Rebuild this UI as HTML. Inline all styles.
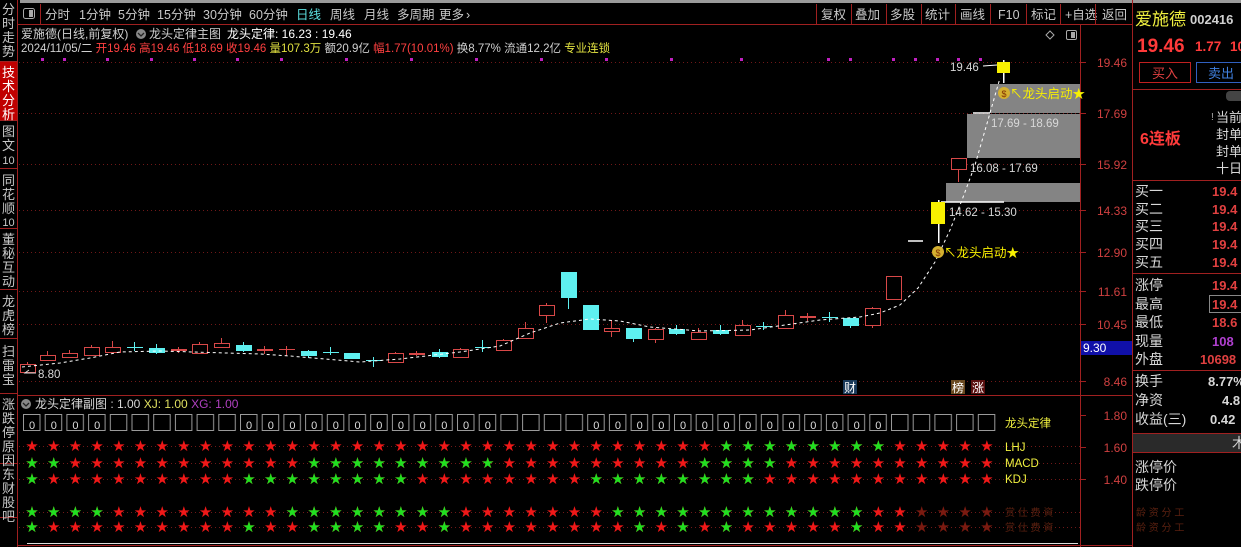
<!DOCTYPE html>
<html><head><meta charset="utf-8"><style>
html,body{margin:0;padding:0;background:#000;width:1241px;height:547px;overflow:hidden}
svg{display:block;font-family:"Liberation Sans","Noto Sans CJK SC",sans-serif}
.s{font-family:"DejaVu Sans",sans-serif;font-size:15px}
</style></head><body>
<svg width="1241" height="547" viewBox="0 0 1241 547" xmlns="http://www.w3.org/2000/svg">
<defs>
<pattern id="bp" patternUnits="userSpaceOnUse" x="23" y="414" width="21.7" height="17">
<rect x="0.5" y="0.5" width="16.5" height="16" fill="none" stroke="#9a9a9a"/>
</pattern>
</defs>
<rect width="1241" height="547" fill="#000"/>
<rect x="20" y="0" width="1221" height="3" fill="#9a9a9a"/>
<!-- left sidebar -->
<g stroke="#a02020" stroke-width="1" fill="none">
<line x1="17.5" y1="0" x2="17.5" y2="547"/>
<line x1="0" y1="61.5" x2="17" y2="61.5"/><line x1="0" y1="120.5" x2="17" y2="120.5"/>
<line x1="0" y1="168.5" x2="17" y2="168.5"/><line x1="0" y1="228.5" x2="17" y2="228.5"/>
<line x1="0" y1="289.5" x2="17" y2="289.5"/><line x1="0" y1="338.5" x2="17" y2="338.5"/>
<line x1="0" y1="393.5" x2="17" y2="393.5"/><line x1="0" y1="463.5" x2="17" y2="463.5"/>
<line x1="0" y1="517.5" x2="17" y2="517.5"/>
</g>
<rect x="0" y="62" width="17" height="58" fill="#c00000"/>
<g font-size="13" fill="#c8c8c8" text-anchor="middle">
<text x="8.5" y="14">分</text><text x="8.5" y="28">时</text><text x="8.5" y="42">走</text><text x="8.5" y="56">势</text>
<text x="8.5" y="77" fill="#fff">技</text><text x="8.5" y="91" fill="#fff">术</text><text x="8.5" y="105" fill="#fff">分</text><text x="8.5" y="119" fill="#fff">析</text>
<text x="8.5" y="136">图</text><text x="8.5" y="150">文</text><text x="8.5" y="164" font-size="11">10</text>
<text x="8.5" y="185">同</text><text x="8.5" y="199">花</text><text x="8.5" y="213">顺</text><text x="8.5" y="226" font-size="11">10</text>
<text x="8.5" y="244">董</text><text x="8.5" y="258">秘</text><text x="8.5" y="272">互</text><text x="8.5" y="286">动</text>
<text x="8.5" y="306">龙</text><text x="8.5" y="320">虎</text><text x="8.5" y="334">榜</text>
<text x="8.5" y="356">扫</text><text x="8.5" y="370">雷</text><text x="8.5" y="384">宝</text>
<text x="8.5" y="409">涨</text><text x="8.5" y="423">跌</text><text x="8.5" y="437">停</text><text x="8.5" y="451">原</text><text x="8.5" y="465">因</text>
<text x="8.5" y="479">东</text><text x="8.5" y="493">财</text><text x="8.5" y="507">股</text><text x="8.5" y="521">吧</text>
</g>
<!-- toolbar -->
<line x1="18" y1="24.5" x2="1132" y2="24.5" stroke="#a02020"/>
<rect x="23.5" y="8.5" width="11" height="10" rx="2" fill="none" stroke="#aaa"/><rect x="29" y="10" width="4" height="7" fill="#aaa"/>
<line x1="40.5" y1="4" x2="40.5" y2="24" stroke="#a02020"/>
<g font-size="12.5" fill="#c8c8c8">
<text x="45" y="19">分时</text><text x="79" y="19">1分钟</text><text x="118" y="19">5分钟</text><text x="157" y="19">15分钟</text><text x="203" y="19">30分钟</text><text x="249" y="19">60分钟</text>
<text x="296" y="19" fill="#5ce0e0">日线</text><text x="330" y="19">周线</text><text x="364" y="19">月线</text><text x="397" y="19">多周期</text><text x="439" y="19">更多</text><text x="466" y="19">›</text>
<text x="821" y="19">复权</text><text x="855" y="19">叠加</text><text x="890" y="19">多股</text><text x="925" y="19">统计</text><text x="960" y="19">画线</text><text x="998" y="19">F10</text><text x="1031" y="19">标记</text><text x="1065" y="19">+自选</text><text x="1102" y="19">返回</text>
</g>
<g stroke="#a02020"><line x1="816.5" y1="4" x2="816.5" y2="24"/><line x1="851.5" y1="4" x2="851.5" y2="24"/><line x1="886.5" y1="4" x2="886.5" y2="24"/><line x1="921.5" y1="4" x2="921.5" y2="24"/><line x1="955.5" y1="4" x2="955.5" y2="24"/><line x1="990.5" y1="4" x2="990.5" y2="24"/><line x1="1026.5" y1="4" x2="1026.5" y2="24"/><line x1="1060.5" y1="4" x2="1060.5" y2="24"/><line x1="1095.5" y1="4" x2="1095.5" y2="24"/></g>
<!-- info lines -->
<g font-size="12" fill="#d0d0d0">
<text x="21" y="38">爱施德(日线,前复权)</text>
<circle cx="141" cy="34" r="5" fill="#888"/><path d="M138 33l3 3 3-3" stroke="#222" stroke-width="1.3" fill="none"/>
<text x="149" y="38">龙头定律主图</text><text x="227" y="38" fill="#fff">龙头定律: 16.23 : 19.46</text>
<text x="21" y="52" font-size="11.5">2024/11/05/二 <tspan fill="#ff4040">开19.46 高19.46 低18.69 收19.46</tspan> <tspan fill="#e0e040">量107.3万</tspan> 额20.9亿 <tspan fill="#ff4040">幅1.77(10.01%)</tspan> 换8.77% 流通12.2亿 <tspan fill="#e0e040">专业连锁</tspan></text>
</g>
<path d="M1050 31l4 4-4 4-4-4z" stroke="#aaa" fill="none"/>
<rect x="1066.5" y="30.5" width="10" height="9" rx="1.5" fill="none" stroke="#aaa"/><rect x="1071" y="32" width="4" height="6" fill="#aaa"/>
<!-- frame lines -->
<g stroke="#a02020">
<line x1="1080.5" y1="25" x2="1080.5" y2="547"/>
<line x1="1132.5" y1="0" x2="1132.5" y2="547"/>
<line x1="18" y1="395.5" x2="1132" y2="395.5"/>
<line x1="18" y1="545.5" x2="1132" y2="545.5"/>
</g>
<line x1="27" y1="543.5" x2="1078" y2="543.5" stroke="#ddd"/>
<!-- grid -->
<g stroke="#701818" stroke-dasharray="1 3">
<line x1="19" y1="62.5" x2="1080" y2="62.5"/><line x1="19" y1="113.5" x2="1080" y2="113.5"/><line x1="19" y1="164.5" x2="1080" y2="164.5"/>
<line x1="19" y1="210.5" x2="1080" y2="210.5"/><line x1="19" y1="252.5" x2="1080" y2="252.5"/><line x1="19" y1="291.5" x2="1080" y2="291.5"/>
<line x1="19" y1="324.5" x2="1080" y2="324.5"/><line x1="19" y1="381.5" x2="1080" y2="381.5"/>
<line x1="19" y1="446.5" x2="1080" y2="446.5"/><line x1="19" y1="463.5" x2="1080" y2="463.5"/><line x1="19" y1="479.5" x2="1080" y2="479.5"/><line x1="19" y1="512.5" x2="1080" y2="512.5"/><line x1="19" y1="527.5" x2="1080" y2="527.5"/>
</g>
<!-- axis -->
<g stroke="#a02020"><line x1="1080" y1="62.5" x2="1086" y2="62.5"/><line x1="1080" y1="113.5" x2="1086" y2="113.5"/><line x1="1080" y1="164.5" x2="1086" y2="164.5"/><line x1="1080" y1="210.5" x2="1086" y2="210.5"/><line x1="1080" y1="252.5" x2="1086" y2="252.5"/><line x1="1080" y1="291.5" x2="1086" y2="291.5"/><line x1="1080" y1="324.5" x2="1086" y2="324.5"/><line x1="1080" y1="381.5" x2="1086" y2="381.5"/><line x1="1080" y1="415.5" x2="1086" y2="415.5"/><line x1="1080" y1="447.5" x2="1086" y2="447.5"/><line x1="1080" y1="479.5" x2="1086" y2="479.5"/></g>
<g font-size="12" fill="#d04040" text-anchor="end">
<text x="1127" y="67">19.46</text><text x="1127" y="118">17.69</text><text x="1127" y="169">15.92</text><text x="1127" y="215">14.33</text><text x="1127" y="257">12.90</text><text x="1127" y="296">11.61</text><text x="1127" y="329">10.45</text><text x="1127" y="386">8.46</text>
<text x="1127" y="420">1.80</text><text x="1127" y="452">1.60</text><text x="1127" y="484">1.40</text>
</g>
<rect x="1081" y="341" width="51" height="14" fill="#1010a8"/>
<text x="1083" y="352" font-size="12" fill="#fff">9.30</text>
<!-- magenta dots -->
<g fill="#c020c0"><rect x="41" y="58" width="3" height="3"/><rect x="63" y="58" width="3" height="3"/><rect x="106" y="58" width="3" height="3"/><rect x="150" y="58" width="3" height="3"/><rect x="193" y="58" width="3" height="3"/><rect x="236" y="58" width="3" height="3"/><rect x="280" y="58" width="3" height="3"/><rect x="345" y="58" width="3" height="3"/><rect x="410" y="58" width="3" height="3"/><rect x="475" y="58" width="3" height="3"/><rect x="540" y="58" width="3" height="3"/><rect x="605" y="58" width="3" height="3"/><rect x="670" y="58" width="3" height="3"/><rect x="740" y="58" width="3" height="3"/><rect x="827" y="58" width="3" height="3"/><rect x="849" y="58" width="3" height="3"/><rect x="892" y="58" width="3" height="3"/><rect x="914" y="58" width="3" height="3"/><rect x="936" y="58" width="3" height="3"/><rect x="957" y="58" width="3" height="3"/><rect x="979" y="58" width="3" height="3"/></g>
<!-- gray boxes -->
<g fill="#848484">
<rect x="990" y="84" width="90" height="29"/>
<rect x="967" y="114" width="113" height="44"/>
<rect x="946" y="183" width="134" height="19"/>
</g>
<g stroke="#fff" stroke-width="1.5"><line x1="941" y1="202" x2="1004" y2="202"/><line x1="973" y1="113" x2="990" y2="113"/><line x1="908" y1="241" x2="923" y2="241"/></g>
<!-- candles -->
<g stroke="#d84848" fill="none">
<path d="M27.5 362V373M47.5 351V361M69.5 350V358M91.5 345V356M112.5 341V353M199.5 342V354M221.5 338V348M395.5 352V363M460.5 348V358M503.5 339V351M525.5 322V339M546.5 303V323M611.5 320V337M655.5 328V343M698.5 328V340M742.5 320V336M785.5 310V329M872.5 307V328M958.5 158V182"/>
<rect x="20.5" y="364.5" width="15" height="8" fill="#000"/>
<rect x="40.5" y="355.5" width="15" height="5" fill="#000"/>
<rect x="62.5" y="353.5" width="15" height="4" fill="#000"/>
<rect x="84.5" y="347.5" width="15" height="8" fill="#000"/>
<rect x="105.5" y="347.5" width="15" height="5" fill="#000"/>
<rect x="192.5" y="344.5" width="15" height="9" fill="#000"/>
<rect x="214.5" y="343.5" width="15" height="4" fill="#000"/>
<rect x="388.5" y="353.5" width="15" height="9" fill="#000"/>
<rect x="453.5" y="349.5" width="15" height="8" fill="#000"/>
<rect x="496.5" y="340.5" width="15" height="10" fill="#000"/>
<rect x="518.5" y="328.5" width="15" height="10" fill="#000"/>
<rect x="539.5" y="305.5" width="15" height="10" fill="#000"/>
<rect x="604.5" y="328.5" width="15" height="3" fill="#000"/>
<rect x="648.5" y="329.5" width="15" height="10" fill="#000"/>
<rect x="691.5" y="332.5" width="15" height="7" fill="#000"/>
<rect x="735.5" y="325.5" width="15" height="10" fill="#000"/>
<rect x="778.5" y="315.5" width="15" height="13" fill="#000"/>
<rect x="865.5" y="308.5" width="15" height="17" fill="#000"/>
<rect x="886.5" y="276.5" width="15" height="23" fill="#000"/>
<rect x="951.5" y="158.5" width="15" height="11" fill="#000"/>
</g>
<g fill="#d84848">
<rect x="178" y="347" width="1" height="6"/><rect x="171" y="349" width="16" height="2"/>
<rect x="264" y="346" width="1" height="8"/><rect x="257" y="349" width="16" height="2"/>
<rect x="286" y="346" width="1" height="10"/><rect x="279" y="349" width="16" height="1"/>
<rect x="416" y="351" width="1" height="5"/><rect x="409" y="353" width="16" height="2"/>
<rect x="807" y="313" width="1" height="8"/><rect x="800" y="316" width="16" height="2"/>
</g>
<g fill="#5ef0f0">
<rect x="134" y="342" width="1" height="9"/><rect x="127" y="347" width="16" height="1"/>
<rect x="156" y="344" width="1" height="10"/><rect x="149" y="348" width="16" height="5"/>
<rect x="243" y="342" width="1" height="10"/><rect x="236" y="345" width="16" height="6"/>
<rect x="308" y="350" width="1" height="8"/><rect x="301" y="351" width="16" height="5"/>
<rect x="330" y="347" width="1" height="8"/><rect x="323" y="352" width="16" height="1"/>
<rect x="344" y="353" width="16" height="6"/>
<rect x="373" y="357" width="1" height="10"/><rect x="366" y="360" width="16" height="1"/>
<rect x="439" y="349" width="1" height="9"/><rect x="432" y="352" width="16" height="5"/>
<rect x="482" y="340" width="1" height="12"/><rect x="475" y="347" width="16" height="1"/>
<rect x="568" y="272" width="1" height="37"/><rect x="561" y="272" width="16" height="26"/>
<rect x="583" y="305" width="16" height="25"/>
<rect x="633" y="328" width="1" height="14"/><rect x="626" y="328" width="16" height="11"/>
<rect x="676" y="325" width="1" height="10"/><rect x="669" y="329" width="16" height="5"/>
<rect x="720" y="325" width="1" height="10"/><rect x="713" y="330" width="16" height="4"/>
<rect x="763" y="322" width="1" height="8"/><rect x="756" y="326" width="16" height="1"/>
<rect x="829" y="312" width="1" height="10"/><rect x="822" y="317" width="16" height="1"/>
<rect x="850" y="318" width="1" height="10"/><rect x="843" y="318" width="16" height="8"/>
</g>
<rect x="938" y="200" width="1.5" height="43" fill="#fff"/>
<rect x="931" y="202" width="14" height="22" fill="#f8f000"/>
<rect x="1003" y="60" width="1.5" height="23" fill="#fff"/>
<rect x="997" y="62" width="13" height="11" fill="#f8f000"/>
<path d="M983 66L997 65" stroke="#fff"/>
<!-- MA dashed -->
<path d="M22 367 L60 363 L90 358 L120 352 L160 351 L260 354 L290 356 L360 362 L400 359 L460 352 L500 346 L530 333 L560 323 L590 319 L620 321 L650 327 L700 331 L750 330 L820 320 L860 317 L880 313 L900 305 L918 288 L935 262 L950 230 L962 200 L975 165 L988 120 L1000 78" fill="none" stroke="#fff" stroke-dasharray="3 3"/>
<!-- labels on chart -->
<g font-size="11.5" fill="#d8d8d8">
<text x="38" y="378">8.80</text><path d="M36 373H25l4-3" stroke="#ddd" fill="none"/>
<text x="950" y="71">19.46</text>
<text x="991" y="127">17.69 - 18.69</text>
<text x="970" y="172">16.08 - 17.69</text>
<text x="949" y="216">14.62 - 15.30</text>
</g>
<circle cx="1004" cy="93" r="6" fill="#d4b030"/><text x="1004" y="97" font-size="9" fill="#803000" text-anchor="middle">$</text>
<text x="1010" y="98" font-size="12.5" fill="#f8f000">↖龙头启动★</text>
<circle cx="938" cy="252" r="6" fill="#d4b030"/><text x="938" y="256" font-size="9" fill="#803000" text-anchor="middle">$</text>
<text x="944" y="257" font-size="12.5" fill="#f8f000">↖龙头启动★</text>
<rect x="843" y="380" width="14" height="14" fill="#1a3a5a"/><text x="844" y="392" font-size="12" fill="#fff">财</text>
<rect x="951" y="380" width="14" height="14" fill="#6a4a20"/><text x="952" y="392" font-size="12" fill="#fff">榜</text>
<rect x="971" y="380" width="14" height="14" fill="#5a1010"/><text x="972" y="392" font-size="12" fill="#fff">涨</text>
<!-- sub chart title -->
<circle cx="26" cy="404" r="5" fill="#888"/><path d="M23 403l3 3 3-3" stroke="#222" stroke-width="1.3" fill="none"/>
<text x="35" y="408" font-size="12" fill="#d8d8d8">龙头定律副图 : 1.00 <tspan fill="#e0e060">XJ: 1.00</tspan> <tspan fill="#b040c0">XG: 1.00</tspan></text>
<g font-size="11.5" fill="#f0f040">
<text x="1005" y="427">龙头定律</text><text x="1005" y="451">LHJ</text><text x="1005" y="467">MACD</text><text x="1005" y="483">KDJ</text>
</g>
<!-- boxes -->
<rect x="23" y="414" width="976" height="17" fill="url(#bp)"/>
<text font-size="11" fill="#ddd" y="429" x="29 50.7 72.4 94.1 246 267.7 289.4 311.1 332.8 354.5 376.2 397.9 419.6 441.3 463 484.7 593.2 614.9 636.6 658.3 680 701.7 723.4 745.1 766.8 788.5 810.2 831.9 853.6 875.3">000000000000000000000000000000</text>
<!-- stars -->
<g class="s" text-anchor="middle">
<g fill="#f01818">
<text y="451" x="32 53.7 75.4 97.1 118.8 140.5 162.2 183.9 205.6 227.3 249 270.7 292.4 314.1 335.8 357.5 379.2 400.9 422.6 444.3 466 487.7 509.4 531.1 552.8 574.5 596.2 617.9 639.6 661.3 683 704.7 726.4 748.1 769.8 791.5 813.2 834.9 856.6 878.3 900 921.7 943.4 965.1 986.8">★★★★★★★★★★★★★★★★★★★★★★★★★★★★★★★★★★★★★★★★★★★★★</text>
<text y="468" x="32 53.7 75.4 97.1 118.8 140.5 162.2 183.9 205.6 227.3 249 270.7 292.4 314.1 335.8 357.5 379.2 400.9 422.6 444.3 466 487.7 509.4 531.1 552.8 574.5 596.2 617.9 639.6 661.3 683 704.7 726.4 748.1 769.8 791.5 813.2 834.9 856.6 878.3 900 921.7 943.4 965.1 986.8">★★★★★★★★★★★★★★★★★★★★★★★★★★★★★★★★★★★★★★★★★★★★★</text>
<text y="484" x="32 53.7 75.4 97.1 118.8 140.5 162.2 183.9 205.6 227.3 249 270.7 292.4 314.1 335.8 357.5 379.2 400.9 422.6 444.3 466 487.7 509.4 531.1 552.8 574.5 596.2 617.9 639.6 661.3 683 704.7 726.4 748.1 769.8 791.5 813.2 834.9 856.6 878.3 900 921.7 943.4 965.1 986.8">★★★★★★★★★★★★★★★★★★★★★★★★★★★★★★★★★★★★★★★★★★★★★</text>
<text y="517" x="32 53.7 75.4 97.1 118.8 140.5 162.2 183.9 205.6 227.3 249 270.7 292.4 314.1 335.8 357.5 379.2 400.9 422.6 444.3 466 487.7 509.4 531.1 552.8 574.5 596.2 617.9 639.6 661.3 683 704.7 726.4 748.1 769.8 791.5 813.2 834.9 856.6 878.3 900">★★★★★★★★★★★★★★★★★★★★★★★★★★★★★★★★★★★★★★★★★</text>
<text y="532" x="32 53.7 75.4 97.1 118.8 140.5 162.2 183.9 205.6 227.3 249 270.7 292.4 314.1 335.8 357.5 379.2 400.9 422.6 444.3 466 487.7 509.4 531.1 552.8 574.5 596.2 617.9 639.6 661.3 683 704.7 726.4 748.1 769.8 791.5 813.2 834.9 856.6 878.3 900">★★★★★★★★★★★★★★★★★★★★★★★★★★★★★★★★★★★★★★★★★</text>
</g>
<g fill="#7a1a10">
<text y="517" x="921.7 943.4 965.1 986.8">★★★★</text>
<text y="532" x="921.7 943.4 965.1 986.8">★★★★</text>
</g>
<g fill="#20e020">
<text y="451" x="726.4 748.1 769.8 791.5 813.2 834.9 856.6 878.3">★★★★★★★★</text>
<text y="468" x="32 53.7 314.1 335.8 357.5 379.2 400.9 422.6 444.3 466 487.7 704.7 726.4 748.1 769.8">★★★★★★★★★★★★★★★</text>
<text y="484" x="32 249 270.7 292.4 314.1 335.8 357.5 379.2 400.9 596.2 617.9 639.6 661.3 683 704.7 726.4 748.1">★★★★★★★★★★★★★★★★★</text>
<text y="517" x="32 53.7 75.4 97.1 292.4 314.1 335.8 357.5 379.2 400.9 422.6 444.3 617.9 639.6 661.3 683 704.7 726.4 748.1 769.8 791.5 813.2 834.9 856.6">★★★★★★★★★★★★★★★★★★★★★★★★</text>
<text y="532" x="32 249 314.1 335.8 357.5 379.2 444.3 639.6 683 726.4 856.6">★★★★★★★★★★★</text>
</g>
</g>
<!-- right panel -->
<text x="1135" y="25" font-size="17" fill="#f0f040">爱施德</text>
<text x="1190" y="24" font-size="13" font-weight="bold" fill="#d0d0d0">002416</text>
<text x="1137" y="52" font-size="19" font-weight="bold" fill="#ff3a3a">19.46</text>
<text x="1195" y="51" font-size="13.5" font-weight="bold" fill="#ff3a3a">1.77</text>
<text x="1230" y="51" font-size="13.5" font-weight="bold" fill="#ff3a3a">10</text>
<rect x="1139.5" y="62.5" width="51" height="20" fill="none" stroke="#c02020"/>
<text x="1152" y="78" font-size="13" fill="#e04040">买入</text>
<rect x="1196.5" y="62.5" width="50" height="20" fill="none" stroke="#3060c0"/>
<text x="1208" y="78" font-size="13" fill="#4080e0">卖出</text>
<line x1="1133" y1="89.5" x2="1241" y2="89.5" stroke="#a02020"/>
<rect x="1226" y="91" width="20" height="10" rx="4" fill="#444"/>
<text x="1140" y="144" font-size="16" font-weight="bold" fill="#ff3a3a">6连板</text>
<g font-size="13" fill="#d8d8d8"><text x="1216" y="122">当前</text><text x="1216" y="139">封单</text><text x="1216" y="156">封单</text><text x="1216" y="173">十日</text></g>
<text x="1211" y="120" font-size="10" fill="#aaa">!</text>
<line x1="1133" y1="180.5" x2="1241" y2="180.5" stroke="#a02020"/>
<g font-size="14" fill="#d8d8d8">
<text x="1135" y="196">买一</text><text x="1135" y="214">买二</text><text x="1135" y="231">买三</text><text x="1135" y="249">买四</text><text x="1135" y="267">买五</text>
<text x="1135" y="290">涨停</text><text x="1135" y="309">最高</text><text x="1135" y="327">最低</text><text x="1135" y="346">现量</text><text x="1135" y="364">外盘</text>
<text x="1135" y="386">换手</text><text x="1135" y="405">净资</text><text x="1135" y="424">收益(三)</text>
<text x="1135" y="448">深市品种</text>
<text x="1135" y="472">涨停价</text><text x="1135" y="490">跌停价</text>
</g>
<g font-size="13" font-weight="bold" fill="#e04040">
<text x="1212" y="196">19.4</text><text x="1212" y="214">19.4</text><text x="1212" y="231">19.4</text><text x="1212" y="249">19.4</text><text x="1212" y="267">19.4</text>
<text x="1212" y="290">19.4</text><text x="1212" y="309">19.4</text><text x="1212" y="327">18.6</text><text x="1212" y="346" fill="#b040d0">108</text><text x="1200" y="364">10698</text>
<text x="1208" y="386" fill="#d8d8d8">8.77%</text><text x="1222" y="405" fill="#d8d8d8">4.8</text><text x="1210" y="424" fill="#d8d8d8">0.42</text>
</g>
<rect x="1209.5" y="295.5" width="32" height="17" fill="none" stroke="#888"/>
<line x1="1133" y1="273.5" x2="1241" y2="273.5" stroke="#a02020"/>
<line x1="1133" y1="370.5" x2="1241" y2="370.5" stroke="#a02020"/>
<rect x="1133" y="434" width="108" height="18" fill="#2a2a2a"/>
<line x1="1133" y1="433.5" x2="1241" y2="433.5" stroke="#a02020"/>
<line x1="1133" y1="452.5" x2="1241" y2="452.5" stroke="#a02020"/>
<text x="1232" y="448" font-size="14" fill="#d8d8d8">木</text>
<rect x="1133" y="492" width="108" height="55" fill="#000"/>
<g font-size="10" fill="#5a2010"><text x="1005" y="516">赏 仕 费 資</text><text x="1005" y="531">赏 仕 费 資</text><text x="1136" y="516">龄 资 分 工</text><text x="1136" y="531">龄 资 分 工</text></g>
</svg>
</body></html>
